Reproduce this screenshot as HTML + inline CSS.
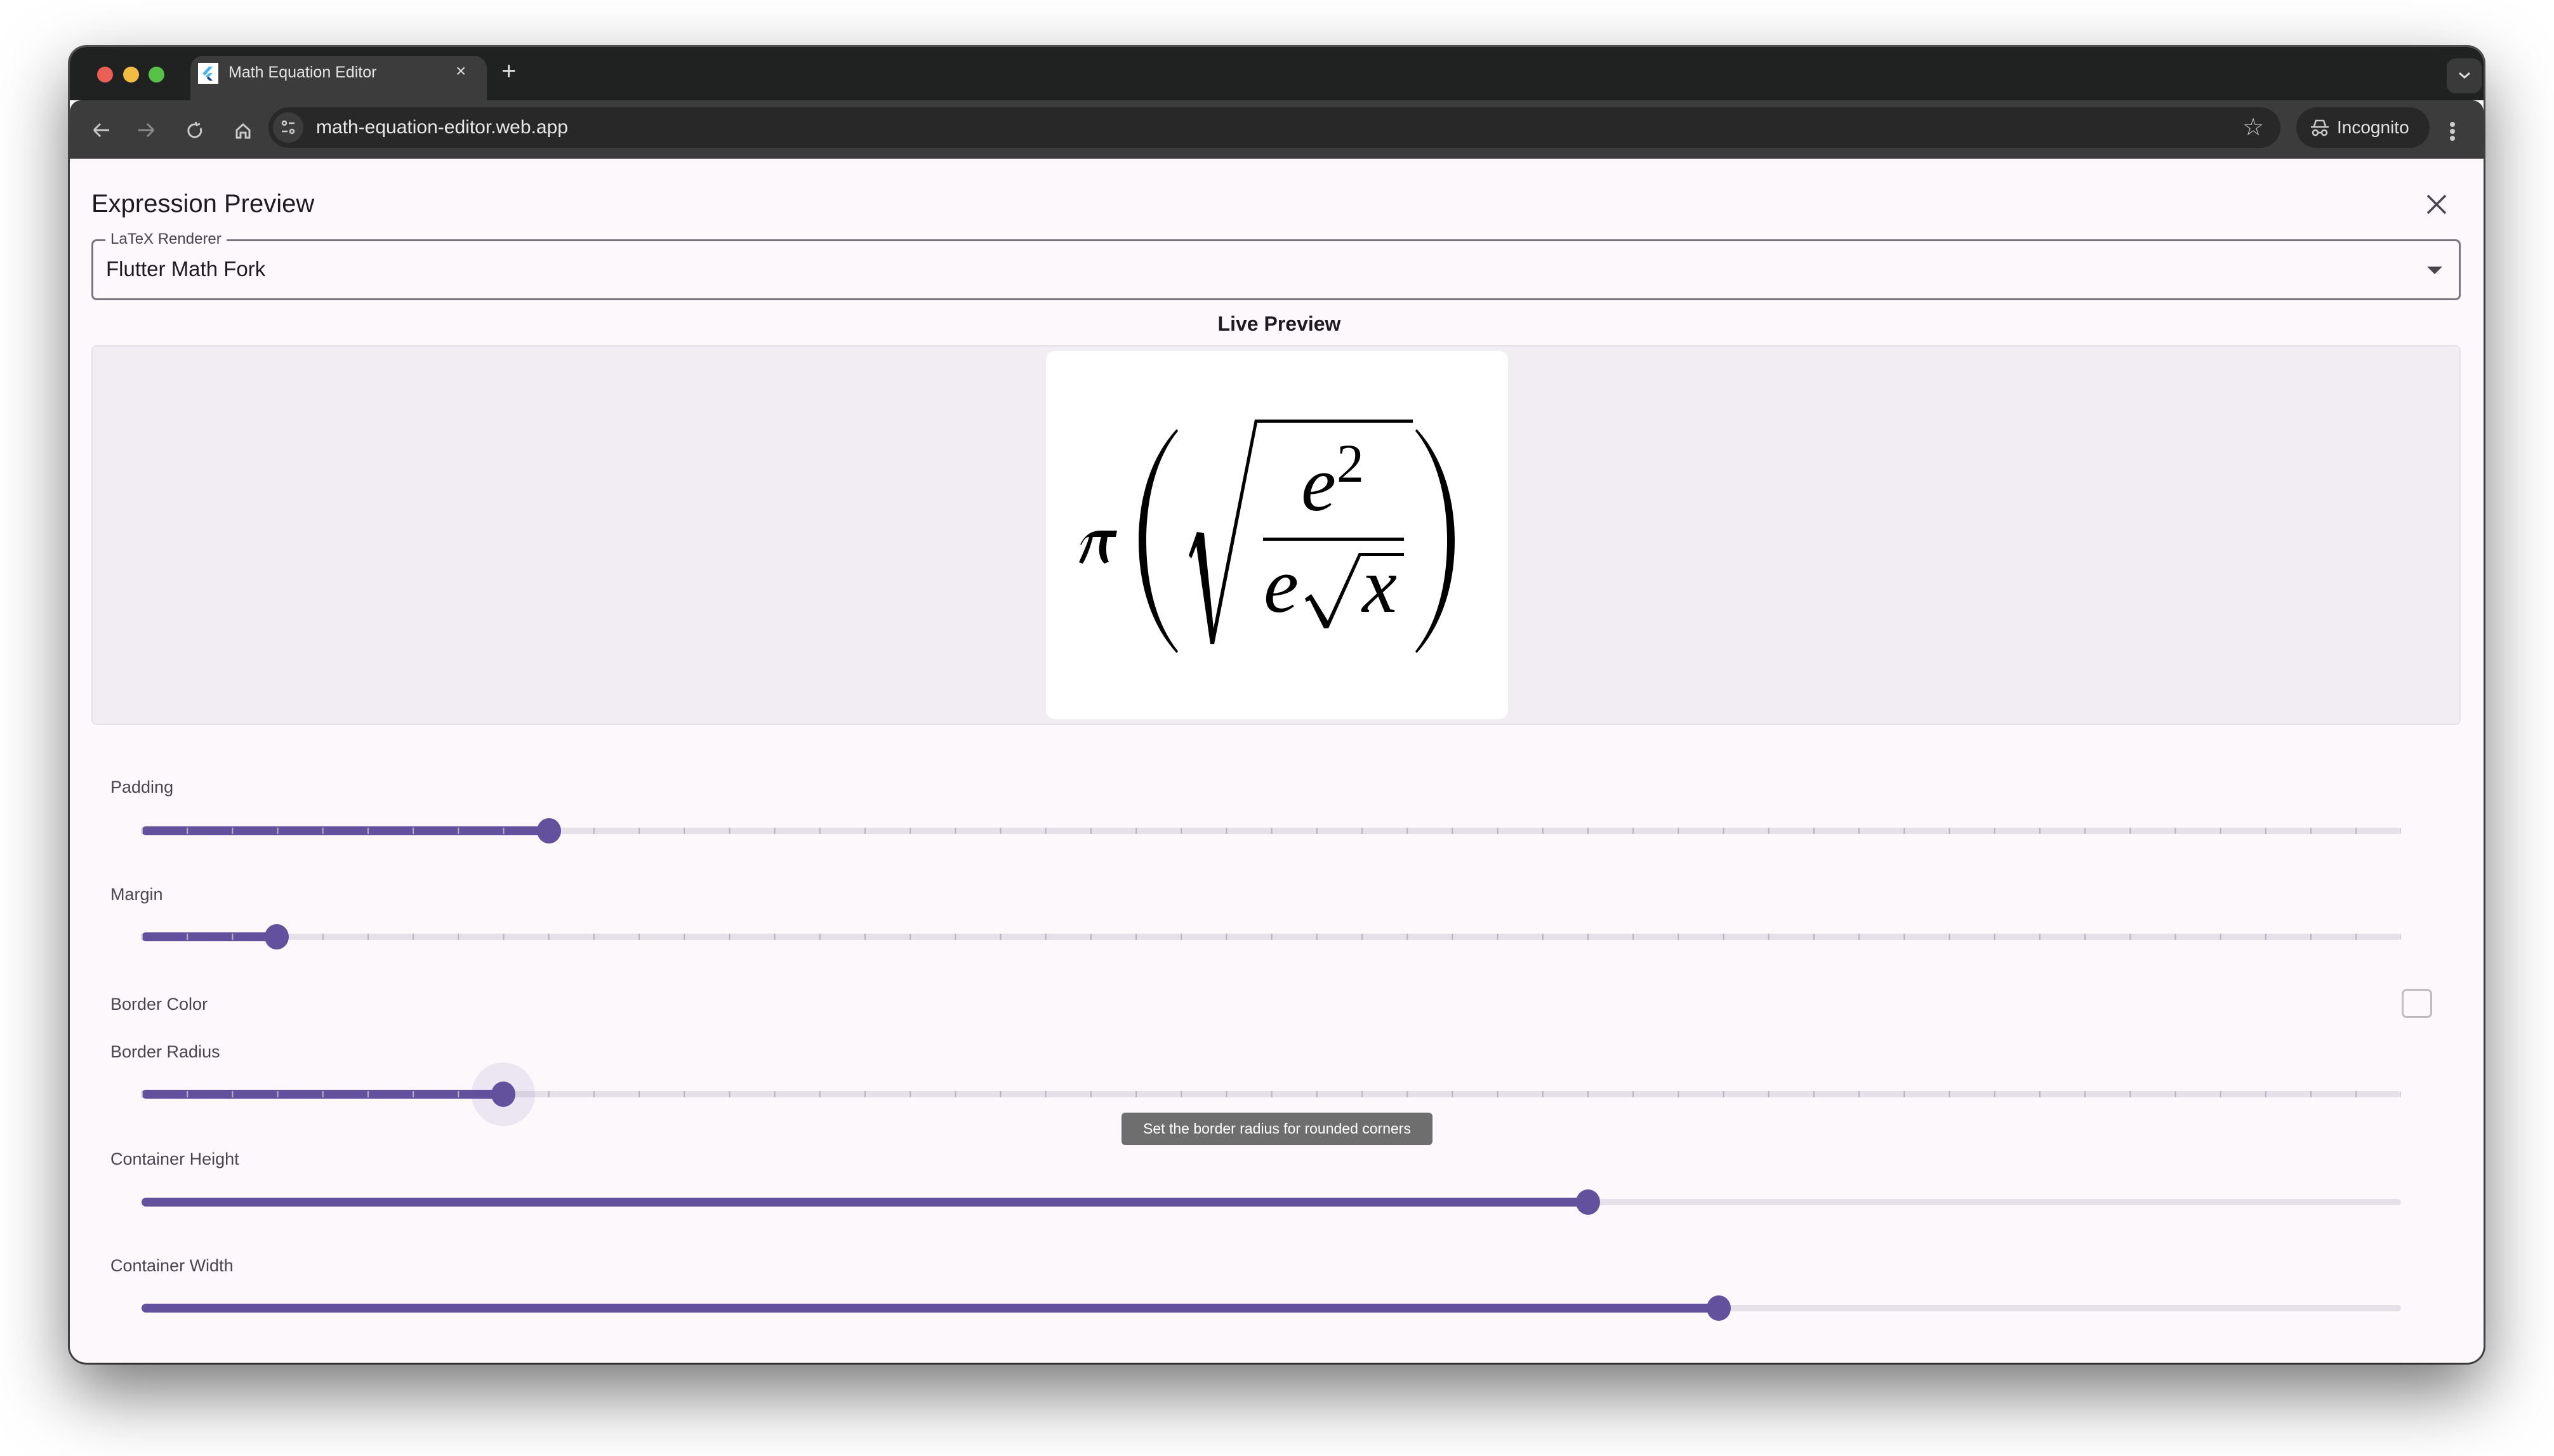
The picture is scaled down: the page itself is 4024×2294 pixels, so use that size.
<!DOCTYPE html>
<html><head><meta charset="utf-8"><style>
*{margin:0;padding:0;box-sizing:border-box}
body{width:4024px;height:2294px;background:#fff;position:relative;overflow:hidden;font-family:"Liberation Sans",sans-serif}
.abs{position:absolute}
#win{left:110px;top:74px;width:3803px;height:2073px;border-radius:26px;background:#fcf8fc;box-shadow:0 45px 110px rgba(0,0,0,.55),0 0 0 3px #555;overflow:hidden}
.lbl{position:absolute;left:64px;font-size:27px;color:#49454f}
.track{position:absolute;left:113px;width:3560px;height:10px;background:#e6e0e9;border-radius:5px}
.act{position:absolute;left:0;top:-2px;height:14px;background:#63519e;border-radius:7px}
.tk{position:absolute;left:0;top:0;right:0;height:10px;background:repeating-linear-gradient(90deg,transparent 0 69px,#b9b2c0 69px 72px,transparent 72px 71.2px);background-size:71.2px 10px;background-position:2px 0}
.thumb{position:absolute;width:38px;height:40px;border-radius:50%;background:#63519e;top:-15px;margin-left:-19px}
</style></head><body>
<div id="win" class="abs">
 <div class="abs" style="left:0;top:0;width:3803px;height:84px;background:#202221"></div>
 <div class="abs" style="left:43px;top:31px;width:25px;height:25px;border-radius:50%;background:#ec5f57"></div>
 <div class="abs" style="left:84px;top:31px;width:25px;height:25px;border-radius:50%;background:#f2bb41"></div>
 <div class="abs" style="left:124px;top:31px;width:25px;height:25px;border-radius:50%;background:#58c248"></div>
 <div class="abs" style="left:190px;top:14px;width:467px;height:75px;background:#3c3c3c;border-radius:20px 20px 0 0"></div>
 <div class="abs" style="left:202px;top:25px;width:32px;height:33px;background:#fff"><svg width="32" height="33"><path d="M17 6 L7 17 L11 20 L23 6Z" fill="#46b4ee"/><path d="M12 21 L18 16 L23 16 L15 24Z" fill="#46b4ee"/><path d="M14 24 L18 28 L23 28 L17 22Z" fill="#0d3b95"/></svg></div>
 <div class="abs" style="left:250px;top:26px;font-size:25px;color:#e3e3e3">Math Equation Editor</div>
 <div class="abs" style="left:608px;top:22px;font-size:28px;color:#ddd">×</div>
 <div class="abs" style="left:680px;top:16px;font-size:40px;color:#ddd;font-weight:300">+</div>
 <div class="abs" style="left:3745px;top:18px;width:55px;height:55px;border-radius:14px;background:#3a3a3a"></div>
 <svg class="abs" style="left:3762px;top:38px" width="22" height="14" fill="none" stroke="#ddd" stroke-width="3"><path d="M3 3 L11 10 L19 3"/></svg>
 <div class="abs" style="left:0;top:84px;width:3803px;height:92px;background:#3c3c3c;border-radius:18px 18px 0 0"></div>
 <svg class="abs" style="left:30px;top:110px" width="260" height="42" fill="none" stroke="#c8c8c8" stroke-width="3">
  <path d="M8 21 H32 M8 21 L18 11 M8 21 L18 31"/>
  <path d="M78 21 H102 M102 21 L92 11 M102 21 L92 31" stroke="#8a8a8a"/>
  <path d="M168 12 A10 10 0 1 0 176 18 M168 8 L170 13 L175 11"/>
  <path d="M233 33 V21 L243 12 L253 21 V33 H247 V25 H239 V33Z"/>
 </svg>
 <div class="abs" style="left:313px;top:95px;width:3170px;height:64px;border-radius:32px;background:#282828"></div>
 <div class="abs" style="left:320px;top:103px;width:48px;height:48px;border-radius:50%;background:#3c3c3c"></div>
 <svg class="abs" style="left:330px;top:113px" width="28" height="28" stroke="#ccc" stroke-width="2.5" fill="none"><circle cx="8" cy="7" r="3"/><path d="M15 7 H24 M4 20 H13"/><circle cx="20" cy="20" r="3"/></svg>
 <div class="abs" style="left:388px;top:110px;font-size:30px;color:#e8e8e8">math-equation-editor.web.app</div>
 <div class="abs" style="left:3423px;top:104px;font-size:38px;color:#ccc">☆</div>
 <div class="abs" style="left:3508px;top:95px;width:210px;height:64px;border-radius:32px;background:#282828"></div>
 <svg class="abs" style="left:3528px;top:113px" width="34" height="30" fill="none" stroke="#ccc" stroke-width="2.5"><path d="M8 12 L11 3 H23 L26 12 M3 13 H31"/><circle cx="10" cy="22" r="4"/><circle cx="24" cy="22" r="4"/><path d="M14 22 H20"/></svg>
 <div class="abs" style="left:3572px;top:111px;font-size:28px;color:#e3e3e3">Incognito</div>
 <div class="abs" style="left:3750px;top:118px;width:8px;height:8px;border-radius:50%;background:#ccc;box-shadow:0 11px 0 #ccc,0 22px 0 #ccc"></div>
 <div class="abs" style="left:34px;top:225px;font-size:40px;color:#1d1b20">Expression Preview</div>
 <svg class="abs" style="left:3712px;top:231px" width="34" height="34" stroke="#49454f" stroke-width="3.5"><path d="M3 3 L31 31 M31 3 L3 31"/></svg>
 <div class="abs" style="left:34px;top:303px;width:3733px;height:96px;border:3px solid #79747e;border-radius:8px"></div>
 <div class="abs" style="left:56px;top:289px;padding:0 8px;background:#fcf8fc;font-size:24px;color:#49454f">LaTeX Renderer</div>
 <div class="abs" style="left:57px;top:331px;font-size:33px;color:#1d1b20">Flutter Math Fork</div>
 <div class="abs" style="left:3714px;top:346px;width:0;height:0;border-left:12px solid transparent;border-right:12px solid transparent;border-top:12px solid #49454f"></div>
 <div class="abs" style="left:0;top:418px;width:3803px;text-align:center;font-size:32px;font-weight:bold;color:#1d1b20;padding-left:8px">Live Preview</div>
 <div class="abs" style="left:34px;top:470px;width:3733px;height:598px;background:#f1edf3;border:2px solid #e6e1e8;border-radius:8px"></div>
 <svg class="abs" style="left:-110px;top:-74px" width="4024" height="2294">
  <rect x="1648" y="553" width="728" height="580" rx="14" fill="#fff"/>
  <path d="M1702 858 C1710 842 1720 836 1735 836 L1760 836 L1758 846 L1745 846 C1742 862 1742 875 1747 885 L1740 888 C1730 878 1730 862 1735 846 L1722 846 C1718 862 1712 878 1706 888 L1700 886 C1706 872 1712 860 1716 846 C1710 846 1707 852 1704 858Z" fill="#000"/>
  <path d="M1854 676 C1806 728 1794 800 1794 852 C1794 905 1806 976 1854 1029 L1856 1026 C1816 976 1806 905 1806 852 C1806 800 1816 728 1856 679Z" fill="#000"/>
  <path d="M2232 676 C2280 728 2292 800 2292 852 C2292 905 2280 976 2232 1029 L2230 1026 C2270 976 2280 905 2280 852 C2280 800 2270 728 2230 679Z" fill="#000"/>
  <path d="M1873 875 L1886 838 L1897 840 L1912 990 L1977 661 L2226 661 L2226 666 L1981 666 L1913 1015 L1907 1015 L1885 860 L1877 880Z" fill="#000"/>
  <text x="2050" y="804" font-family="Liberation Serif,serif" font-style="italic" font-size="124">e</text>
  <text x="2106" y="759" font-family="Liberation Serif,serif" font-size="86">2</text>
  <rect x="1990" y="847" width="222" height="5" fill="#000"/>
  <text x="1991" y="964" font-family="Liberation Serif,serif" font-style="italic" font-size="124">e</text>
  <path d="M2056 943 L2066 936 L2092 978 L2141 871 L2212 871 L2212 876 L2144 876 L2093 990 L2086 990 L2064 946 L2058 948Z" fill="#000"/>
  <text x="2146" y="964" font-family="Liberation Serif,serif" font-style="italic" font-size="124">x</text>
 </svg>
 <div class="lbl" style="top:1151px">Padding</div>
 <div class="track" style="top:1230px"><div class="act" style="width:650px"></div><div class="tk"></div><div class="thumb" style="left:642px"></div></div>
 <div class="lbl" style="top:1320px">Margin</div>
 <div class="track" style="top:1397px"><div class="act" style="width:220px"></div><div class="tk"></div><div class="thumb" style="left:213px"></div></div>
 <div class="lbl" style="top:1493px">Border Color</div>
 <div class="abs" style="left:3674px;top:1484px;width:48px;height:46px;border:3px solid #bdbdbd;border-radius:8px"></div>
 <div class="lbl" style="top:1568px">Border Radius</div>
 <div class="track" style="top:1645px"><div class="act" style="width:575px"></div><div class="tk"></div><div class="abs" style="left:520px;top:-45px;width:100px;height:100px;border-radius:50%;background:rgba(99,81,158,.1)"></div><div class="thumb" style="left:570px"></div></div>
 <div class="abs" style="left:1657px;top:1679px;width:490px;height:51px;border-radius:6px;background:#6e6e6e;color:#fff;font-size:23px;text-align:center;line-height:51px">Set the border radius for rounded corners</div>
 <div class="lbl" style="top:1737px">Container Height</div>
 <div class="track" style="top:1815px"><div class="act" style="width:2280px"></div><div class="thumb" style="left:2279px"></div></div>
 <div class="lbl" style="top:1905px">Container Width</div>
 <div class="track" style="top:1982px"><div class="act" style="width:2486px"></div><div class="thumb" style="left:2485px"></div></div>
</div>
</body></html>
